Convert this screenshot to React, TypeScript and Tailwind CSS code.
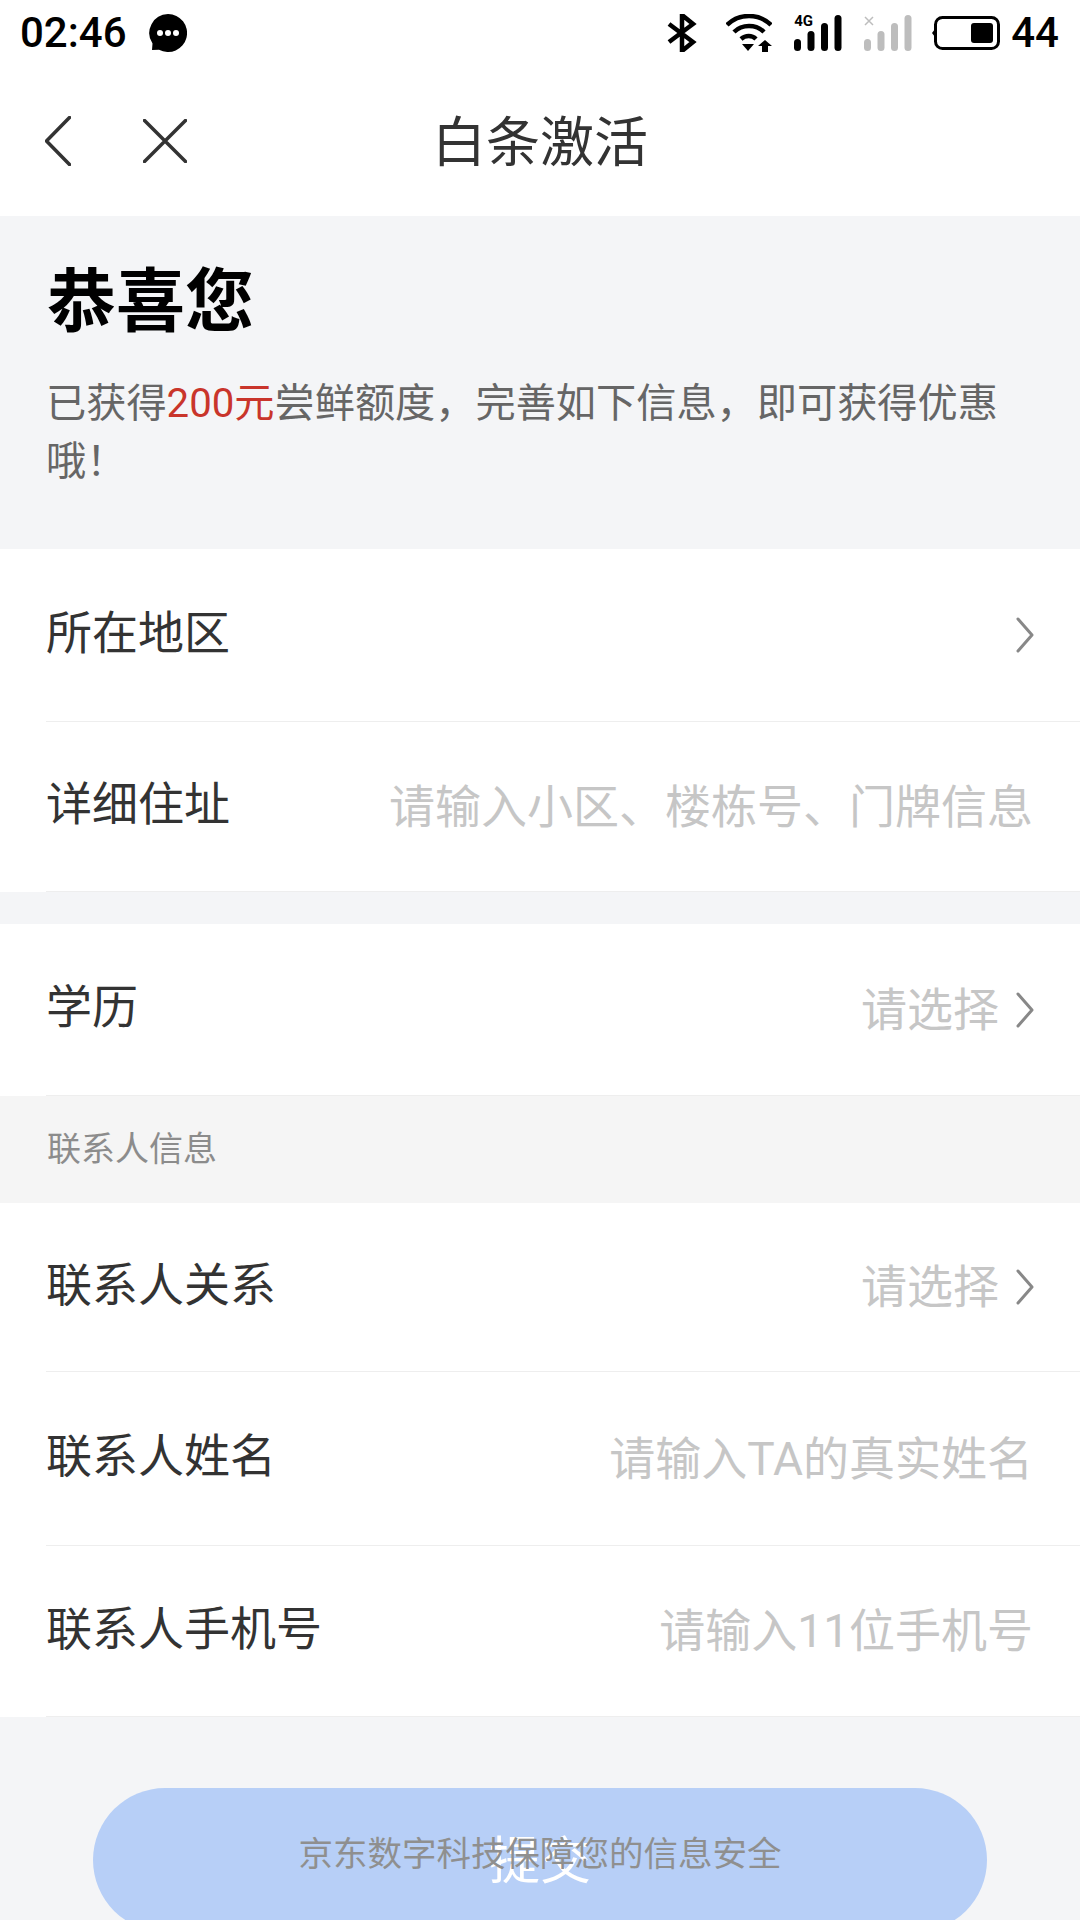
const cjk = "font-['Roboto','Noto_Sans_CJK_SC','Noto_Sans',sans-serif]";

function Chevron() {
  return (
    <svg width="18" height="36" viewBox="0 0 18 36" fill="none" className="shrink-0">
      <path d="M2 2l14 16L2 34" stroke="#888888" strokeWidth="3" strokeLinecap="round" strokeLinejoin="round" />
    </svg>
  );
}

function Bars({ color }: { color: string }) {
  return (
    <svg width="48" height="36" viewBox="0 0 48 36" className="shrink-0">
      <rect x="0" y="24" width="7" height="12" rx="3.5" fill={color} />
      <rect x="13.5" y="16" width="7" height="20" rx="3.5" fill={color} />
      <rect x="27" y="8" width="7" height="28" rx="3.5" fill={color} />
      <rect x="40.5" y="0" width="7" height="36" rx="3.5" fill={color} />
    </svg>
  );
}

function StatusBar() {
  return (
    <div className="h-[66px] flex items-center justify-between pl-[20px] pr-[21px] font-['Roboto',sans-serif] text-black">
      <div className="flex items-center gap-[24px]">
        <span className="text-[42px] font-medium leading-none w-[105px]">02:46</span>
        <svg width="38" height="38" viewBox="0 0 38 38">
          <path d="M19 0a19 19 0 1 1-9 35.700L3 36l.5-6.500A19 19 0 0 1 19 0z" fill="#000" />
          <circle cx="11" cy="19" r="3" fill="#fff" />
          <circle cx="19" cy="19" r="3" fill="#fff" />
          <circle cx="27" cy="19" r="3" fill="#fff" />
        </svg>
      </div>
      <div className="flex items-center">
        <svg width="30" height="38" viewBox="0 0 30 38" fill="none">
          <path d="M2 10l24 18-11 9V1l11 9L2 28" stroke="#000" strokeWidth="4.500" strokeLinejoin="miter" />
        </svg>
        <svg width="46" height="38" viewBox="0 0 46 38" fill="none" className="ml-[29px]">
          <path d="M1 11C13 -1 33 -1 45 11" stroke="#000" strokeWidth="4.500" />
          <path d="M8 18c8-8 22-8 30 0" stroke="#000" strokeWidth="4.500" />
          <path d="M15 25c4.500-4 11-4 15 0" stroke="#000" strokeWidth="4.500" />
          <path d="M16 30h12l-6 7z" fill="#000" />
          <path d="M39 26l7 6h-4v6h-6v-6h-4z" fill="#000" />
        </svg>
        <div className="relative ml-[22px]">
          <Bars color="#000" />
          <span className="absolute left-0 top-[-1px] text-[15px] leading-[14px] font-bold">4G</span>
        </div>
        <div className="relative ml-[22px]">
          <Bars color="#bdbdbd" />
          <svg width="10" height="10" viewBox="0 0 10 10" className="absolute left-0 top-[1px]">
            <path d="M1 1l8 8M9 1L1 9" stroke="#bdbdbd" strokeWidth="1.500" />
          </svg>
        </div>
        <svg width="68" height="34" viewBox="0 0 68 34" fill="none" className="ml-[20px]">
          <path d="M0 17l3-4v8z" fill="#000" />
          <rect x="3.500" y="1.500" width="63" height="31" rx="7" stroke="#000" strokeWidth="3" />
          <rect x="39" y="7" width="22" height="20" rx="3" fill="#000" />
        </svg>
        <span className="text-[42px] font-medium leading-none ml-[11px]">44</span>
      </div>
    </div>
  );
}

function NavBar() {
  return (
    <div className="relative h-[150px] flex items-center justify-center">
      <div className="absolute left-[45px] top-[50px] flex items-center gap-[72px]">
        <svg width="26" height="50" viewBox="0 0 26 50" fill="none">
          <path d="M24.500 1.500L1.500 25l23 23.500" stroke="#333" strokeWidth="3.500" strokeLinecap="round" strokeLinejoin="round" />
        </svg>
        <svg width="44" height="44" viewBox="0 0 44 44" fill="none">
          <path d="M1.500 1.500l41 41M42.500 1.500l-41 41" stroke="#333" strokeWidth="3.500" strokeLinecap="round" />
        </svg>
      </div>
      <span className="text-[54px] leading-none text-[#333333] mt-[5px]">白条激活</span>
    </div>
  );
}

function Row({
  label,
  value,
  placeholder,
  chevron,
  height,
}: {
  label: string;
  value?: string;
  placeholder?: string;
  chevron?: boolean;
  height: string;
}) {
  return (
    <div className={`bg-white pl-[46px] ${height}`}>
      <div className={`h-full flex items-center justify-between border-b border-[#eeeeee] ${chevron ? 'pr-[46px]' : 'pr-[47px]'}`}>
        <span className="text-[46px] leading-none text-[#333333] mb-[5px]">{label}</span>
        <div className="flex items-center gap-[17px]">
          {placeholder && <span className="text-[46px] leading-none text-[#c6c6c6]">{placeholder}</span>}
          {value && <span className="text-[46px] leading-none text-[#c6c6c6]">{value}</span>}
          {chevron && <Chevron />}
        </div>
      </div>
    </div>
  );
}

export default function App() {
  return (
    <div className={`relative w-[1080px] h-[1920px] overflow-hidden bg-[#f4f5f7] ${cjk}`}>
      <div className="bg-white">
        <StatusBar />
        <NavBar />
      </div>

      <div className="h-[333px] pl-[47px] pr-[48px] pt-[45px]">
        <h1 className="text-[69px] leading-[84px] font-bold text-black">恭喜您</h1>
        <p className="mt-[30px] -ml-[1px] text-[40.2px] leading-[58px] text-[#666666]">
          已获得<span className="text-[#c9352b]">200元</span>尝鲜额度，完善如下信息，即可获得优惠哦！
        </p>
      </div>

      <Row label="所在地区" chevron height="h-[173px]" />
      <Row label="详细住址" placeholder="请输入小区、楼栋号、门牌信息" height="h-[170px]" />
      <div className="h-[32px]" />
      <Row label="学历" value="请选择" chevron height="h-[172px]" />
      <div className="h-[107px] bg-[#f5f5f5] pl-[47px] flex items-center">
        <span className="text-[34px] leading-none text-[#8c8c8c] mb-[2px]">联系人信息</span>
      </div>
      <Row label="联系人关系" value="请选择" chevron height="h-[169px]" />
      <Row label="联系人姓名" placeholder="请输入TA的真实姓名" height="h-[174px]" />
      <Row label="联系人手机号" placeholder="请输入11位手机号" height="h-[171px]" />

      <div className="relative mt-[71px] mx-[93px] h-[144px] rounded-full bg-[#b7cff7] flex items-center justify-center">
        <span className="text-[51px] leading-none text-white mt-[3px]">提交</span>
      </div>
      <span className="absolute left-0 right-0 top-[1832px] text-center text-[34.500px] leading-[44px] text-[#8f8f8f]">
        京东数字科技保障您的信息安全
      </span>
    </div>
  );
}
